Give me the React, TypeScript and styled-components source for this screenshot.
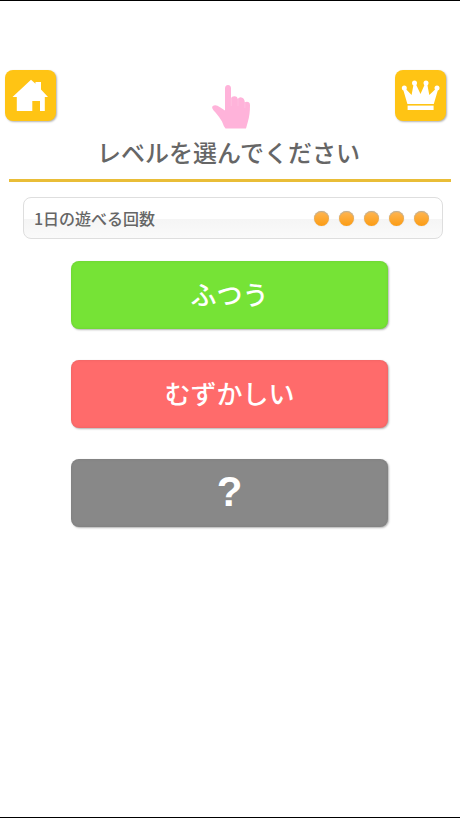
import React from 'react';
import styled, { createGlobalStyle } from 'styled-components';

const GlobalStyle = createGlobalStyle`
  *, *::before, *::after { box-sizing: border-box; }
  body {
    margin: 0;
    background: #fff;
    color: #666;
    font-family: "Noto Sans CJK JP", sans-serif;
  }
`;

const Screen = styled.main`
  min-height: 100vh;
  display: flex;
  flex-direction: column;
  padding-top: 69px;
  border-top: 1px solid #000;
  border-bottom: 1px solid #000;
`;

const TopBar = styled.header`
  display: flex;
  justify-content: space-between;
  align-items: flex-start;
  padding: 0 14px 0 5px;
`;

const IconButton = styled.button`
  width: 51px;
  height: 51px;
  padding: 0;
  border: 0;
  border-radius: 8px;
  background: #ffc414;
  box-shadow: 1px 1px 2px rgba(0, 0, 0, 0.3);
  cursor: pointer;

  svg { display: block; width: 51px; height: 51px; }
`;

const Pointer = styled.svg`
  width: 40px;
  height: 46px;
  margin-top: 14px;
  margin-left: 10px;
`;

const Title = styled.h1`
  margin: 0 9px;
  padding: 4px 3px 0 0;
  height: 52px;
  border-bottom: 3px solid #e9bd37;
  font-size: 24px;
  line-height: 36px;
  font-weight: 500;
  text-align: center;
`;

const PlaysPanel = styled.section`
  display: flex;
  justify-content: space-between;
  align-items: center;
  height: 42px;
  margin: 15px 17px 0 23px;
  padding: 0 13px 0 10px;
  border: 1px solid #dedede;
  border-radius: 8px;
  background: linear-gradient(#fff 0%, #fff 52%, #f5f5f5 53%, #fafafa 100%);
`;

const PlaysLabel = styled.span`
  font-size: 16px;
  line-height: 24px;
  font-weight: 500;
`;

const Dots = styled.div`
  display: flex;
  gap: 10px;
`;

const Dot = styled.span`
  width: 15px;
  height: 15px;
  border-radius: 50%;
  background: linear-gradient(#ffb653, #fb9c14);
  box-shadow: inset 0 1px 1px #b9b09f, 0 0 1px #bbb;
`;

const Levels = styled.nav`
  display: flex;
  flex-direction: column;
  gap: 31px;
  margin: 22px 72px 0 71px;
`;

const LevelButton = styled.button<{ $color: string; $large?: boolean }>`
  height: 68px;
  padding: 0 0 2px;
  border: 0;
  border-radius: 8px;
  background: ${(p) => p.$color};
  box-shadow: 1px 1px 2px rgba(0, 0, 0, 0.3), inset 0 0 3px rgba(0, 0, 0, 0.1);
  color: #fff;
  font-family: ${(p) => (p.$large ? '"Liberation Sans", sans-serif' : 'inherit')};
  font-size: ${(p) => (p.$large ? 42 : 26)}px;
  line-height: 36px;
  font-weight: ${(p) => (p.$large ? 700 : 500)};
  cursor: pointer;
`;

const levels = [
  { name: 'ふつう', color: '#76e336' },
  { name: 'むずかしい', color: '#ff6b6b' },
  { name: '?', color: '#888888', large: true },
];

const HomeIcon = () => (
  <svg viewBox="0 0 51 51" fill="#fff" aria-hidden="true">
    <path d="M26 9.8 L30.5 13.8 V12 H36 V19.5 L43 27 H39.8 V41 H35 V31 H27.3 V41 H11.8 V27 H7.5 Z" />
  </svg>
);

const CrownIcon = () => (
  <svg viewBox="0 0 51 51" fill="#fff" aria-hidden="true">
    <circle cx="9.3" cy="18" r="2.5" />
    <circle cx="19.5" cy="13" r="2.5" />
    <circle cx="31" cy="13" r="2.5" />
    <circle cx="42" cy="18" r="2.5" />
    <path d="M8 19 L10.8 19 L16.6 25 L18.6 14 H20.8 L25.5 24 L29.9 14 H32.2 L34.3 25 L40.6 19 H43.2 L38.8 34 H12.4 Z" />
    <path d="M12.6 35.6 H38.6 V40 H12.6 Z" />
  </svg>
);

export default function App() {
  return (
    <>
      <GlobalStyle />
      <Screen>
        <TopBar>
          <IconButton type="button" aria-label="ホーム">
            <HomeIcon />
          </IconButton>
          <Pointer viewBox="0 0 40 46" fill="#ffb3da" aria-hidden="true">
            <path d="M14 38 V4.5 Q14 1 17 1 Q20 1 20 4.5 V14 Q21 12 23.5 12.2 Q26.5 12.5 26.7 15 Q28 13 30.5 13.4 Q33.5 14 33.8 18.3 Q35.5 17.2 37.3 18 Q39 18.6 39 21 Q39 31 36.8 38 L35 44.5 H14.5 Q12.5 42 11 37.5 Q8 32.5 4.5 28.5 Q0 24.3 1.5 22.3 Q4.5 20 9 23.2 L14 26.5 Z" />
            <path d="M20.3 14 V22 M27 15 V22 M33.9 18.3 V24" stroke="#ffc7e3" strokeWidth="0.6" />
          </Pointer>
          <IconButton type="button" aria-label="ランキング">
            <CrownIcon />
          </IconButton>
        </TopBar>
        <Title>レベルを選んでください</Title>
        <PlaysPanel>
          <PlaysLabel>1日の遊べる回数</PlaysLabel>
          <Dots role="img" aria-label="5">
            {[1, 2, 3, 4, 5].map((n) => (
              <Dot key={n} />
            ))}
          </Dots>
        </PlaysPanel>
        <Levels>
          {levels.map((level) => (
            <LevelButton key={level.name} type="button" $color={level.color} $large={level.large}>
              {level.name}
            </LevelButton>
          ))}
        </Levels>
      </Screen>
    </>
  );
}
